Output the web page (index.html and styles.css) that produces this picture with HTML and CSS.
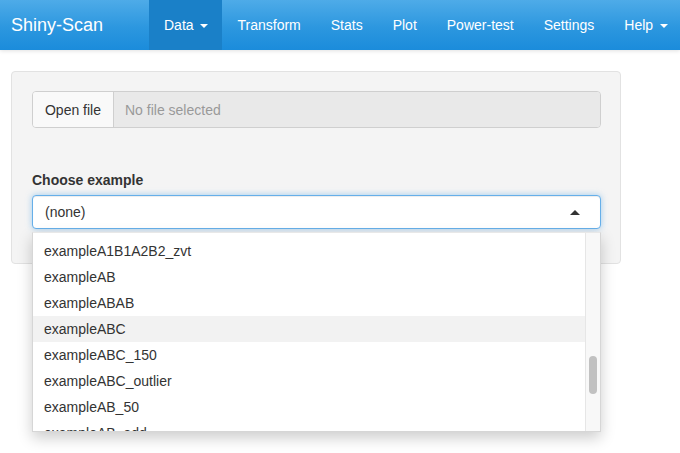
FILE: index.html
```html
<!DOCTYPE html>
<html>
<head>
<meta charset="utf-8">
<link rel="stylesheet" href="styles.css">
</head>
<body>
<nav class="navbar">
  <div class="brand">Shiny-Scan</div>
  <ul class="nav">
    <li class="nav-item active">Data <span class="caret"></span></li>
    <li class="nav-item">Transform</li>
    <li class="nav-item">Stats</li>
    <li class="nav-item">Plot</li>
    <li class="nav-item">Power-test</li>
    <li class="nav-item">Settings</li>
    <li class="nav-item">Help <span class="caret"></span></li>
  </ul>
</nav>
<main class="content">
  <div class="well">
    <div class="file-group">
      <div class="file-btn">Open file</div>
      <div class="file-name">No file selected</div>
    </div>
    <label class="label">Choose example</label>
    <div class="select-wrap">
      <div class="select">
        <span>(none)</span>
        <span class="caret-up"></span>
      </div>
      <div class="dropdown">
        <div class="viewport">
          <ul class="options">
            <li class="option">exampleA1B1A2B2</li>
            <li class="option">exampleA1B1A2B2_zvt</li>
            <li class="option">exampleAB</li>
            <li class="option">exampleABAB</li>
            <li class="option hover">exampleABC</li>
            <li class="option">exampleABC_150</li>
            <li class="option">exampleABC_outlier</li>
            <li class="option">exampleAB_50</li>
            <li class="option">exampleAB_add</li>
          </ul>
        </div>
        <div class="track"><div class="thumb"></div></div>
      </div>
    </div>
  </div>
</main>
</body>
</html>
```
FILE: styles.css
```css
* { box-sizing: border-box; }
html, body { margin: 0; padding: 0; background: #fff; }
body {
  font-family: "Liberation Sans", Arial, sans-serif;
  font-size: 14px;
  color: #333;
  width: 680px;
  height: 453px;
  overflow: hidden;
}
.navbar {
  display: flex;
  align-items: stretch;
  height: 50px;
  background: linear-gradient(to bottom, #4eabe8 0%, #2c97df 55%, #1b8cdb 100%);
  box-shadow: 0 1px 4px rgba(0, 0, 0, 0.12);
  position: relative;
  z-index: 2;
}
.brand {
  flex: 0 0 149px;
  padding-left: 11px;
  font-size: 18px;
  line-height: 50px;
  color: #fff;
}
.nav {
  list-style: none;
  margin: 0;
  padding: 0;
  display: flex;
}
.nav-item {
  padding: 0 15px;
  line-height: 50px;
  color: #fff;
  white-space: nowrap;
}
.nav-item.active { background: #1a80c8; padding-right: 14px; }
.caret {
  display: inline-block;
  width: 0;
  height: 0;
  margin-left: 3px;
  vertical-align: middle;
  border-top: 4px solid #fff;
  border-left: 4px solid transparent;
  border-right: 4px solid transparent;
}
.content { padding: 21px 0 0 11px; }
.well {
  width: 610px;
  padding: 19px 19px 34px 20px;
  background: #f4f4f4;
  border: 1px solid #e2e2e2;
  border-radius: 4px;
}
.file-group {
  display: flex;
  height: 37px;
  border: 1px solid #cfcfcf;
  border-radius: 4px;
  overflow: hidden;
}
.file-btn {
  flex: 0 0 81px;
  background: #f9f9f9;
  border-right: 1px solid #cfcfcf;
  padding-top: 2px;
  line-height: 33px;
  text-align: center;
  color: #333;
}
.file-name {
  flex: 1;
  background: #e9e9e9;
  padding-top: 2px;
  line-height: 33px;
  padding-left: 11px;
  color: #999;
}
.label {
  display: block;
  margin-top: 42px;
  margin-bottom: 5px;
  line-height: 20px;
  font-weight: bold;
  color: #333;
}
.select-wrap { position: relative; }
.select {
  display: flex;
  align-items: center;
  justify-content: space-between;
  height: 34px;
  padding: 0 20px 0 12px;
  background: #fff;
  border: 1px solid #66afe9;
  border-radius: 4px;
  box-shadow: inset 0 1px 1px rgba(0,0,0,.075), 0 0 6px rgba(102,175,233,.6);
}
.caret-up {
  width: 0;
  height: 0;
  border-bottom: 5px solid #333;
  border-left: 5px solid transparent;
  border-right: 5px solid transparent;
}
.dropdown {
  position: absolute;
  top: 37px;
  left: 0;
  right: 0;
  height: 200px;
  display: flex;
  background: #fff;
  border: 1px solid #d6d6d6;
  border-top-color: #e8e8e8;
  box-shadow: 0 6px 14px rgba(0, 0, 0, 0.2);
  z-index: 5;
}
.viewport {
  flex: 1;
  overflow: hidden;
}
.options {
  list-style: none;
  margin: -21px 0 0 0;
  padding: 0;
}
.option {
  height: 26px;
  line-height: 20px;
  padding: 3px 11px;
  color: #333;
  white-space: nowrap;
}
.option.hover { background: #f2f2f2; }
.track {
  flex: 0 0 15px;
  background: #f8f8f8;
  border-left: 1px solid #e6e6e6;
  padding: 123px 0 0 3px;
}
.thumb {
  width: 8px;
  height: 38px;
  background: #c1c1c1;
  border-radius: 4px;
}
```
